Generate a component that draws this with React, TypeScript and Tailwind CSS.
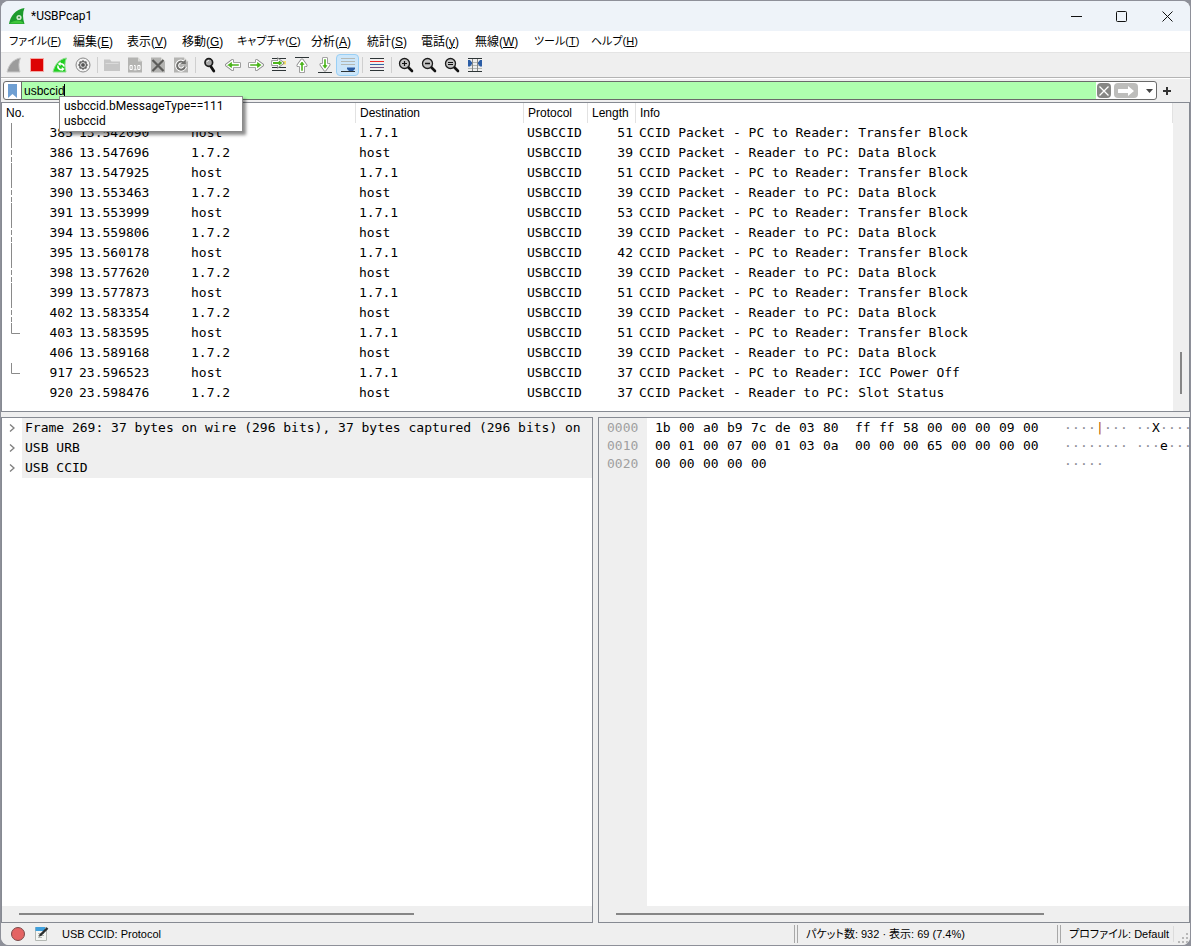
import { useState, type ReactNode } from 'react';

const menus = [
  { label: 'ファイル', accel: 'F', kana: true, width: 'w-[64px]' },
  { label: '編集', accel: 'E', kana: false, width: 'w-[54px]' },
  { label: '表示', accel: 'V', kana: false, width: 'w-[55px]' },
  { label: '移動', accel: 'G', kana: false, width: 'w-[55px]' },
  { label: 'キャプチャ', accel: 'C', kana: true, width: 'w-[74px]' },
  { label: '分析', accel: 'A', kana: false, width: 'w-[56px]' },
  { label: '統計', accel: 'S', kana: false, width: 'w-[54px]' },
  { label: '電話', accel: 'y', kana: false, width: 'w-[54px]' },
  { label: '無線', accel: 'W', kana: false, width: 'w-[59px]' },
  { label: 'ツール', accel: 'T', kana: true, width: 'w-[57px]' },
  { label: 'ヘルプ', accel: 'H', kana: true, width: 'w-[60px]' },
];

const OUT = 'CCID Packet - PC to Reader: ';
const IN = 'CCID Packet - Reader to PC: ';

const packets = [
  { no: 385, time: '13.542090', src: 'host', dst: '1.7.1', len: 51, info: OUT + 'Transfer Block', mark: 'line' },
  { no: 386, time: '13.547696', src: '1.7.2', dst: 'host', len: 39, info: IN + 'Data Block', mark: 'dash' },
  { no: 387, time: '13.547925', src: 'host', dst: '1.7.1', len: 51, info: OUT + 'Transfer Block', mark: 'line' },
  { no: 390, time: '13.553463', src: '1.7.2', dst: 'host', len: 39, info: IN + 'Data Block', mark: 'dash' },
  { no: 391, time: '13.553999', src: 'host', dst: '1.7.1', len: 53, info: OUT + 'Transfer Block', mark: 'line' },
  { no: 394, time: '13.559806', src: '1.7.2', dst: 'host', len: 39, info: IN + 'Data Block', mark: 'dash' },
  { no: 395, time: '13.560178', src: 'host', dst: '1.7.1', len: 42, info: OUT + 'Transfer Block', mark: 'line' },
  { no: 398, time: '13.577620', src: '1.7.2', dst: 'host', len: 39, info: IN + 'Data Block', mark: 'dash' },
  { no: 399, time: '13.577873', src: 'host', dst: '1.7.1', len: 51, info: OUT + 'Transfer Block', mark: 'line' },
  { no: 402, time: '13.583354', src: '1.7.2', dst: 'host', len: 39, info: IN + 'Data Block', mark: 'dash' },
  { no: 403, time: '13.583595', src: 'host', dst: '1.7.1', len: 51, info: OUT + 'Transfer Block', mark: 'end' },
  { no: 406, time: '13.589168', src: '1.7.2', dst: 'host', len: 39, info: IN + 'Data Block', mark: '' },
  { no: 917, time: '23.596523', src: 'host', dst: '1.7.1', len: 37, info: OUT + 'ICC Power Off', mark: 'end' },
  { no: 920, time: '23.598476', src: '1.7.2', dst: 'host', len: 37, info: IN + 'Slot Status', mark: '' },
];

const details = [
  'Frame 269: 37 bytes on wire (296 bits), 37 bytes captured (296 bits) on',
  'USB URB',
  'USB CCID',
];

const hexRows = [
  { offset: '0000', hex: '1b 00 a0 b9 7c de 03 80 ff ff 58 00 00 00 09 00', ascii: '····|··· ··X····' },
  { offset: '0010', hex: '00 01 00 07 00 01 03 0a 00 00 00 65 00 00 00 00', ascii: '········ ···e···' },
  { offset: '0020', hex: '00 00 00 00 00', ascii: '·····' },
];

const FIN = 'M1 15 C2.5 8 7 2 14.5 1 C12.5 5 12.5 10 14 15 Z';

function Icon({ children, size = 16 }: { children: ReactNode; size?: number }) {
  return (
    <svg width={size} height={size} viewBox="0 0 16 16" fill="none" aria-hidden="true">
      {children}
    </svg>
  );
}

function Page({ children }: { children: ReactNode }) {
  return (
    <Icon>
      <path d="M1 .5H11L15 4.5V15.5H1Z" fill="#b4b4b2" />
      <path d="M11 .5V4.5H15Z" fill="#dcdcda" />
      {children}
    </Icon>
  );
}

function Magnifier({ children }: { children?: ReactNode }) {
  return (
    <Icon>
      <path d="M10 10L14 14" stroke="#111" strokeWidth="2.6" strokeLinecap="round" />
      <circle cx="6.5" cy="6.5" r="5" fill="#c4c4c4" stroke="#1c1c1c" strokeWidth="1.3" />
      {children}
    </Icon>
  );
}

const arrowRight = 'M1.5 6.5H8.5V3.5L14.5 8L8.5 12.5V9.5H1.5Z';
const arrowLeft = 'M14.5 6.5H7.5V3.5L1.5 8L7.5 12.5V9.5H14.5Z';

function Arrow({ d }: { d: string }) {
  return (
    <>
      <path d={d} fill="#4cb51c" stroke="#888" strokeWidth="3" strokeLinejoin="round" />
      <path d={d} fill="#4cb51c" stroke="#fff" strokeWidth="1.4" strokeLinejoin="round" />
    </>
  );
}

const toolGroups = [
  [
    {
      name: 'Start capture',
      icon: (
        <Icon>
          <path d={FIN} fill="#9c9c9c" stroke="#c8c8c8" />
        </Icon>
      ),
    },
    {
      name: 'Stop capture',
      icon: (
        <Icon>
          <path d="M1.5 1.5H14.5V14.5H1.5Z" fill="#dd0303" stroke="#f3a9a5" />
        </Icon>
      ),
    },
    {
      name: 'Restart capture',
      icon: (
        <Icon>
          <path d={FIN} fill="#1fce1f" stroke="#8fdc8f" />
          <path d="M6 8.5A3.2 3.2 0 0 0 10.5 12.2M12 9.5A3.2 3.2 0 0 0 8 6.8" stroke="#fff" strokeWidth="1.6" />
          <path d="M8.6 4.6V9L5.8 7ZM9.8 10V14.2L12.6 12Z" fill="#fff" />
        </Icon>
      ),
    },
    {
      name: 'Capture options',
      icon: (
        <Icon>
          <circle cx="8" cy="8" r="7" fill="#f2f2f2" stroke="#8a8a8a" />
          <circle cx="8" cy="8" r="4" fill="#666" />
          <path d="M8 3.2V12.8M3.2 8H12.8M4.6 4.6L11.4 11.4M11.4 4.6L4.6 11.4" stroke="#666" strokeWidth="1.6" />
          <circle cx="8" cy="8" r="2.4" fill="#555" stroke="#ececec" />
        </Icon>
      ),
    },
  ],
  [
    {
      name: 'Open',
      icon: (
        <Icon>
          <path d="M0 2.5H6L7.5 4.5H16V14H0Z" fill="#c6c6c6" />
          <path d="M1.5 6H14.5V7H1.5Z" fill="#dadada" />
        </Icon>
      ),
    },
    {
      name: 'Save',
      icon: (
        <Page>
          <path d="M3 8.5H5.2V12.5H3ZM10.8 8.5H13V12.5H10.8Z" stroke="#fff" />
          <path d="M7 8.5H8.2V12.5M6.8 12.8H9.6" stroke="#fff" />
        </Page>
      ),
    },
    {
      name: 'Close',
      icon: (
        <Page>
          <path d="M2.5 3L13.5 14M13.5 3L2.5 14" stroke="#5c5c5a" strokeWidth="2.2" />
        </Page>
      ),
    },
    {
      name: 'Reload',
      icon: (
        <Page>
          <path d="M11.5 6.5A4 4 0 1 0 12 9.5" stroke="#fff" strokeWidth="4" />
          <path d="M11.5 6.5A4 4 0 1 0 12 9.5" stroke="#70706e" strokeWidth="2" />
          <path d="M7.5 7H12.8V2.5Z" fill="#70706e" />
        </Page>
      ),
    },
  ],
  [
    {
      name: 'Find packet',
      icon: (
        <Icon>
          <path d="M8.5 9L11.8 14" stroke="#111" strokeWidth="2.8" strokeLinecap="round" />
          <circle cx="6.8" cy="5.5" r="3.8" fill="#a8a8a8" stroke="#1c1c1c" strokeWidth="1.7" />
          <path d="M5 5A2 2 0 0 1 7 3.4" stroke="#eee" />
        </Icon>
      ),
    },
    { name: 'Go back', icon: <Icon><Arrow d={arrowLeft} /></Icon> },
    { name: 'Go forward', icon: <Icon><Arrow d={arrowRight} /></Icon> },
    {
      name: 'Go to packet',
      icon: (
        <Icon>
          <path d="M1 1.5H15M1 10.5H15M1 13.5H15" stroke="#2d3436" />
          <path d="M9 4H15V7.5H9Z" fill="#f7e06a" />
          <path d="M1.5 4.5H7.5V2.5L12 6L7.5 9.5V7.5H1.5Z" fill="#4cb51c" stroke="#888" strokeWidth="2.4" />
          <path d="M1.5 4.5H7.5V2.5L12 6L7.5 9.5V7.5H1.5Z" fill="#4cb51c" stroke="#fff" />
        </Icon>
      ),
    },
    {
      name: 'First packet',
      icon: (
        <Icon>
          <path d="M1 .5H15" stroke="#2d3436" />
          <Arrow d="M6.5 14.5V8.5H4L8 3L12 8.5H9.5V14.5Z" />
        </Icon>
      ),
    },
    {
      name: 'Last packet',
      icon: (
        <Icon>
          <path d="M1 15.5H15" stroke="#2d3436" />
          <Arrow d="M6.5 1.5V7.5H4L8 13L12 7.5H9.5V1.5Z" />
        </Icon>
      ),
    },
    {
      name: 'Auto scroll',
      checked: true,
      icon: (
        <Icon>
          <path d="M1 1.5H15M1 4.5H15M1 7.5H15" stroke="#b4b8b4" />
          <path d="M1 14.5H15" stroke="#2d3436" />
          <path d="M7 10.5H15V12L13 14H9L7 12Z" fill="#2b5da5" />
        </Icon>
      ),
    },
  ],
  [
    {
      name: 'Colorize',
      icon: (
        <Icon>
          <path d="M1 1.5H15M1 13.5H15" stroke="#2d3436" />
          <path d="M1 4.5H15" stroke="#ef2929" />
          <path d="M1 7.5H15" stroke="#3465a4" />
          <path d="M1 10.5H15" stroke="#75507b" />
        </Icon>
      ),
    },
  ],
  [
    { name: 'Zoom in', icon: <Magnifier><path d="M4 6.5H9M6.5 4V9" stroke="#111" strokeWidth="1.2" /></Magnifier> },
    { name: 'Zoom out', icon: <Magnifier><path d="M4 6.5H9" stroke="#111" strokeWidth="1.4" /></Magnifier> },
    { name: 'Normal size', icon: <Magnifier><path d="M4 5.5H9M4 7.5H9" stroke="#111" /></Magnifier> },
    {
      name: 'Resize columns',
      icon: (
        <Icon>
          <path d="M1 1.5H15M1 14.5H15" stroke="#2d3436" />
          <path d="M1 5.5H15M1 8.5H15M1 11.5H15" stroke="#b4b8b4" />
          <path d="M5.5 2V14M10.5 2V14" stroke="#888" />
          <path d="M1 3H3L5 5.5V7L3 9.5H1ZM15 3H13L11 5.5V7L13 9.5H15Z" fill="#2b5da5" />
        </Icon>
      ),
    },
  ],
];

function TreeMark({ mark }: { mark: string }) {
  return (
    <svg width="20" height="20" viewBox="0 0 20 20" fill="none" stroke="#8a8a8a" className="block" aria-hidden="true">
      {mark === 'line' && <path d="M9.5 0V20" />}
      {mark === 'dash' && <path d="M9.5 0V20" strokeDasharray="5 2" />}
      {mark === 'end' && <path d="M9.5 0V10.5H18" />}
    </svg>
  );
}

function TitleBar() {
  return (
    <header className="flex h-[30px] shrink-0 items-center bg-[#eef3f9] pl-2 font-[Roboto,sans-serif] text-xs">
      <svg width="16" height="16" viewBox="0 0 16 16" aria-hidden="true">
        <path d="M0 16C1.5 8 6.5 1.5 15.5 0C13.5 4.5 13.6 10.5 15.5 16Z" fill="#1c9a2c" />
        <path d="M1 15C5 12 12 11 15 15.5H1Z" fill="#3fc63a" />
        <circle cx="10" cy="9.5" r="2.6" fill="#cfe8cf" />
        <circle cx="10" cy="9.5" r="1.1" fill="#3d8c45" />
      </svg>
      <h1 className="ml-1.5 flex-1">*USBPcap1</h1>
      <button type="button" aria-label="Minimize" className="flex h-full w-[46px] items-center justify-center">
        <svg width="11" height="11" stroke="#111" fill="none"><path d="M0 5.5H11" /></svg>
      </button>
      <button type="button" aria-label="Maximize" className="flex h-full w-[45px] items-center justify-center">
        <svg width="11" height="11" stroke="#111" fill="none"><rect x=".5" y=".5" width="10" height="10" rx="1" /></svg>
      </button>
      <button type="button" aria-label="Close window" className="flex h-full w-[46px] items-center justify-center">
        <svg width="11" height="11" stroke="#111" fill="none"><path d="M.5 .5L10.5 10.5M10.5 .5L.5 10.5" /></svg>
      </button>
    </header>
  );
}

function FilterBar() {
  const [filter, setFilter] = useState('usbccid');

  return (
    <div className="relative flex h-6 shrink-0 items-center border-t border-white bg-[#efefef] pl-0.5 pr-1">
      <div className="flex h-[19px] flex-1 items-stretch overflow-hidden rounded-[3px] border border-[#6a6a6a] bg-white">
        <button type="button" aria-label="Bookmarks" className="flex w-[18px] items-center justify-center border-r border-[#6a6a6a]">
          <svg width="9" height="14" viewBox="0 0 9 14"><path d="M0 0H9V14L4.5 10L0 14Z" fill="#6f9fd2" /></svg>
        </button>
        <label htmlFor="filter" className="sr-only">Display filter</label>
        <input
          id="filter"
          type="text"
          value={filter}
          onChange={(e) => setFilter(e.target.value)}
          className="min-w-0 flex-1 bg-[#afffaf] pl-0.5 text-xs outline-none"
        />
        <button type="button" aria-label="Clear" className="m-px flex w-[14px] items-center justify-center rounded-sm bg-[#878785]">
          <svg width="10" height="10" stroke="#fff" strokeWidth="1.3"><path d="M.5 .5L9.5 9.5M9.5 .5L.5 9.5" /></svg>
        </button>
        <button type="button" aria-label="Apply" className="my-px ml-0.5 flex w-6 items-center justify-center rounded-sm bg-[#bdbdbb]">
          <svg width="16" height="10" fill="#fff"><path d="M0 3.5Q0 3 .5 3H10V0L16 5L10 10V7H.5Q0 7 0 6.5Z" /></svg>
        </button>
        <button type="button" aria-label="Filter history" className="ml-1 flex w-[14px] items-center justify-center">
          <svg width="7" height="4" fill="#444"><path d="M0 0H7L3.5 4Z" /></svg>
        </button>
      </div>
      <button type="button" aria-label="Add filter button" className="flex h-5 w-[29px] items-center pl-1.5">
        <svg width="8" height="8" stroke="#333" strokeWidth="2"><path d="M0 4H8M4 0V8" /></svg>
      </button>

      {/* Completion list, hangs over the packet list */}
      <span className="absolute left-[63px] top-[5px] z-10 h-3 w-px bg-black" />
      <ul className="absolute left-[58px] top-[17px] z-20 w-[184px] border border-[#8a8a8a] bg-white py-[2px] pl-1 font-[Roboto,sans-serif] text-xs leading-[15px] shadow-[3px_3px_3px_rgba(0,0,0,0.45)]">
        <li>usbccid.bMessageType==111</li>
        <li>usbccid</li>
      </ul>
    </div>
  );
}

function PacketList() {
  return (
    <section className="flex shrink-0 border border-[#868a92] bg-white">
      <div className="min-w-0 flex-1 overflow-hidden pb-2">
        <table className="w-full table-fixed border-separate border-spacing-0">
          <colgroup>
            <col className="w-5" />
            <col className="w-[54px]" />
            <col className="w-[112px]" />
            <col className="w-[168px]" />
            <col className="w-[168px]" />
            <col className="w-[64px]" />
            <col className="w-[48px]" />
            <col />
          </colgroup>
          <thead className="text-left text-xs leading-[19px] [&_th]:border-r [&_th]:border-[#e2e2e2] [&_th]:pb-0 [&_th]:pl-1 [&_th]:pt-px [&_th]:font-normal">
            <tr>
              <th colSpan={2}>No.</th>
              <th>Time</th>
              <th>Source</th>
              <th>Destination</th>
              <th>Protocol</th>
              <th>Length</th>
              <th>Info</th>
            </tr>
          </thead>
          <tbody className="whitespace-nowrap font-['DejaVu_Sans_Mono',monospace] text-[13px] leading-5 [&_td]:py-0 [&_td]:pl-[3px]">
            {packets.map((p) => (
              <tr key={p.no}>
                <td className="!pl-0"><TreeMark mark={p.mark} /></td>
                <td className="pr-[3px] text-right">{p.no}</td>
                <td>{p.time}</td>
                <td>{p.src}</td>
                <td>{p.dst}</td>
                <td>USBCCID</td>
                <td className="pr-[3px] text-right">{p.len}</td>
                <td>{p.info}</td>
              </tr>
            ))}
          </tbody>
        </table>
      </div>
      <div className="flex w-4 items-end justify-center bg-[#efefef] pb-[17px]">
        <div className="h-[42px] w-0.5 bg-[#868686]" />
      </div>
    </section>
  );
}

function HScroll({ thumb }: { thumb: string }) {
  return (
    <div className="flex h-4 shrink-0 items-center bg-[#efefef] px-[17px]">
      <div className={`h-0.5 bg-[#868686] ${thumb}`} />
    </div>
  );
}

function PacketDetails() {
  return (
    <section className="flex min-w-0 flex-1 flex-col border border-[#868a92] bg-white">
      <ul className="flex-1 overflow-hidden font-['DejaVu_Sans_Mono',monospace] text-[13px] leading-5">
        {details.map((line) => (
          <li key={line} className="flex">
            <button type="button" aria-label="Expand" className="flex w-5 shrink-0 items-center justify-center">
              <svg width="6" height="8" fill="none" stroke="#808080" strokeWidth="1.4"><path d="M1 .5L5 4L1 7.5" /></svg>
            </button>
            <span className="flex-1 overflow-hidden whitespace-nowrap bg-[#efefef] pl-[3px]">{line}</span>
          </li>
        ))}
      </ul>
      <HScroll thumb="w-[71%]" />
    </section>
  );
}

function asciiColor(ch: string) {
  if (ch === '|') return 'text-[#b86000]';
  return ch === '·' ? 'text-[#8c8c94]' : 'text-black';
}

function PacketBytes() {
  return (
    <section className="flex min-w-0 flex-1 flex-col border border-[#868a92] bg-white">
      <div className="flex flex-1 overflow-hidden font-['DejaVu_Sans_Mono',monospace] text-[13px] leading-[18px]">
        <div className="w-12 shrink-0 bg-[#efefef] pl-2 pt-px text-[#a0a0a0]">
          {hexRows.map((r) => <div key={r.offset}>{r.offset}</div>)}
        </div>
        <div className="w-[409px] shrink-0 pl-2 pt-px">
          {hexRows.map((r) => (
            <div key={r.offset} className="flex">
              {r.hex.split(' ').map((byte, i) => (
                <span key={i} className={`shrink-0 ${i === 7 ? 'w-8' : 'w-6'}`}>{byte}</span>
              ))}
            </div>
          ))}
        </div>
        <div className="shrink-0 pl-2 pt-px">
          {hexRows.map((r) => (
            <div key={r.offset} className="flex">
              {r.ascii.split('').map((ch, i) => (
                <span key={i} className={`w-2 shrink-0 ${asciiColor(ch)}`}>{ch}</span>
              ))}
            </div>
          ))}
        </div>
      </div>
      <HScroll thumb="w-[77%]" />
    </section>
  );
}

function Grip() {
  return <div className="mr-2 h-[18px] w-1 border-x border-[#a8a8a8]" />;
}

function StatusBar() {
  return (
    <footer className="flex h-[22px] shrink-0 items-center bg-[#efefef] text-[11px]">
      <button type="button" aria-label="Expert information" className="ml-2.5 h-[14px] w-[14px] rounded-full border border-[#7a4a4a] bg-[#e46464]" />
      <button type="button" aria-label="Capture comment" className="ml-2 mr-[13px]">
        <Icon>
          <path d="M2.5 1.5H13.5V14.5H2.5Z" fill="#f4f6f4" stroke="#b4b8b4" />
          <path d="M2.5 1H12V5H2.5Z" fill="#3fa0dd" />
          <path d="M5 7.5H11M5 9.5H11M5 11.5H9" stroke="#b4b8b4" />
          <path d="M7 9.5L14.5 2" stroke="#2b2f30" strokeWidth="2.4" />
          <path d="M5.5 11L7 8.5L8 9.8Z" fill="#2b2f30" />
        </Icon>
      </button>
      <span className="flex-1">USB CCID: Protocol</span>
      <div className="flex w-[263px] items-center whitespace-nowrap">
        <Grip />
        <span>パケット数: 932 · 表示: 69 (7.4%)</span>
      </div>
      <div className="flex items-center whitespace-nowrap">
        <Grip />
        <button type="button" className="border-r border-[#dcdcdc] pr-1">プロファイル: Default</button>
      </div>
      <svg width="16" height="18" fill="#b8b8b8" aria-hidden="true">
        <path d="M12 8h2v2h-2zM12 12h2v2h-2zM12 16h2v2h-2zM8 12h2v2h-2zM8 16h2v2h-2zM4 16h2v2h-2z" />
      </svg>
    </footer>
  );
}

export default function App() {
  return (
    <div className="h-screen bg-[#8e9099] p-px font-['Liberation_Sans','Noto_Sans_CJK_JP',sans-serif] text-black [font-feature-settings:'palt']">
      <div className="flex h-full flex-col overflow-hidden rounded-lg bg-[#efefef]">
        <TitleBar />

        <nav className="flex h-[21px] shrink-0 items-center whitespace-nowrap bg-white pl-2 text-xs">
          {menus.map((m) => (
            <button key={m.accel} type="button" className={`shrink-0 text-left ${m.width} ${m.kana ? 'text-[11px]' : ''}`}>
              {m.label}(<span className="underline">{m.accel}</span>)
            </button>
          ))}
        </nav>

        <div role="toolbar" className="flex h-[26px] shrink-0 items-center border-b border-t border-b-[#b4b4b4] border-t-[#e4e4e4] pl-px">
          {toolGroups.map((group, i) => (
            <div key={i} className="flex items-center">
              {i > 0 && <div className="mx-[2px] h-4 w-[2px] border-r border-[#cfcfcf]" />}
              {group.map((tool) => (
                <button
                  key={tool.name}
                  type="button"
                  aria-label={tool.name}
                  className={`flex h-[22px] w-[23px] items-center justify-center rounded-sm ${'checked' in tool ? 'border border-[#99cff5] bg-[#cce6fa]' : ''}`}
                >
                  {tool.icon}
                </button>
              ))}
            </div>
          ))}
        </div>

        <FilterBar />
        <PacketList />

        <main className="mt-[5px] flex min-h-0 flex-1 gap-[5px]">
          <PacketDetails />
          <PacketBytes />
        </main>

        <StatusBar />
      </div>
    </div>
  );
}
